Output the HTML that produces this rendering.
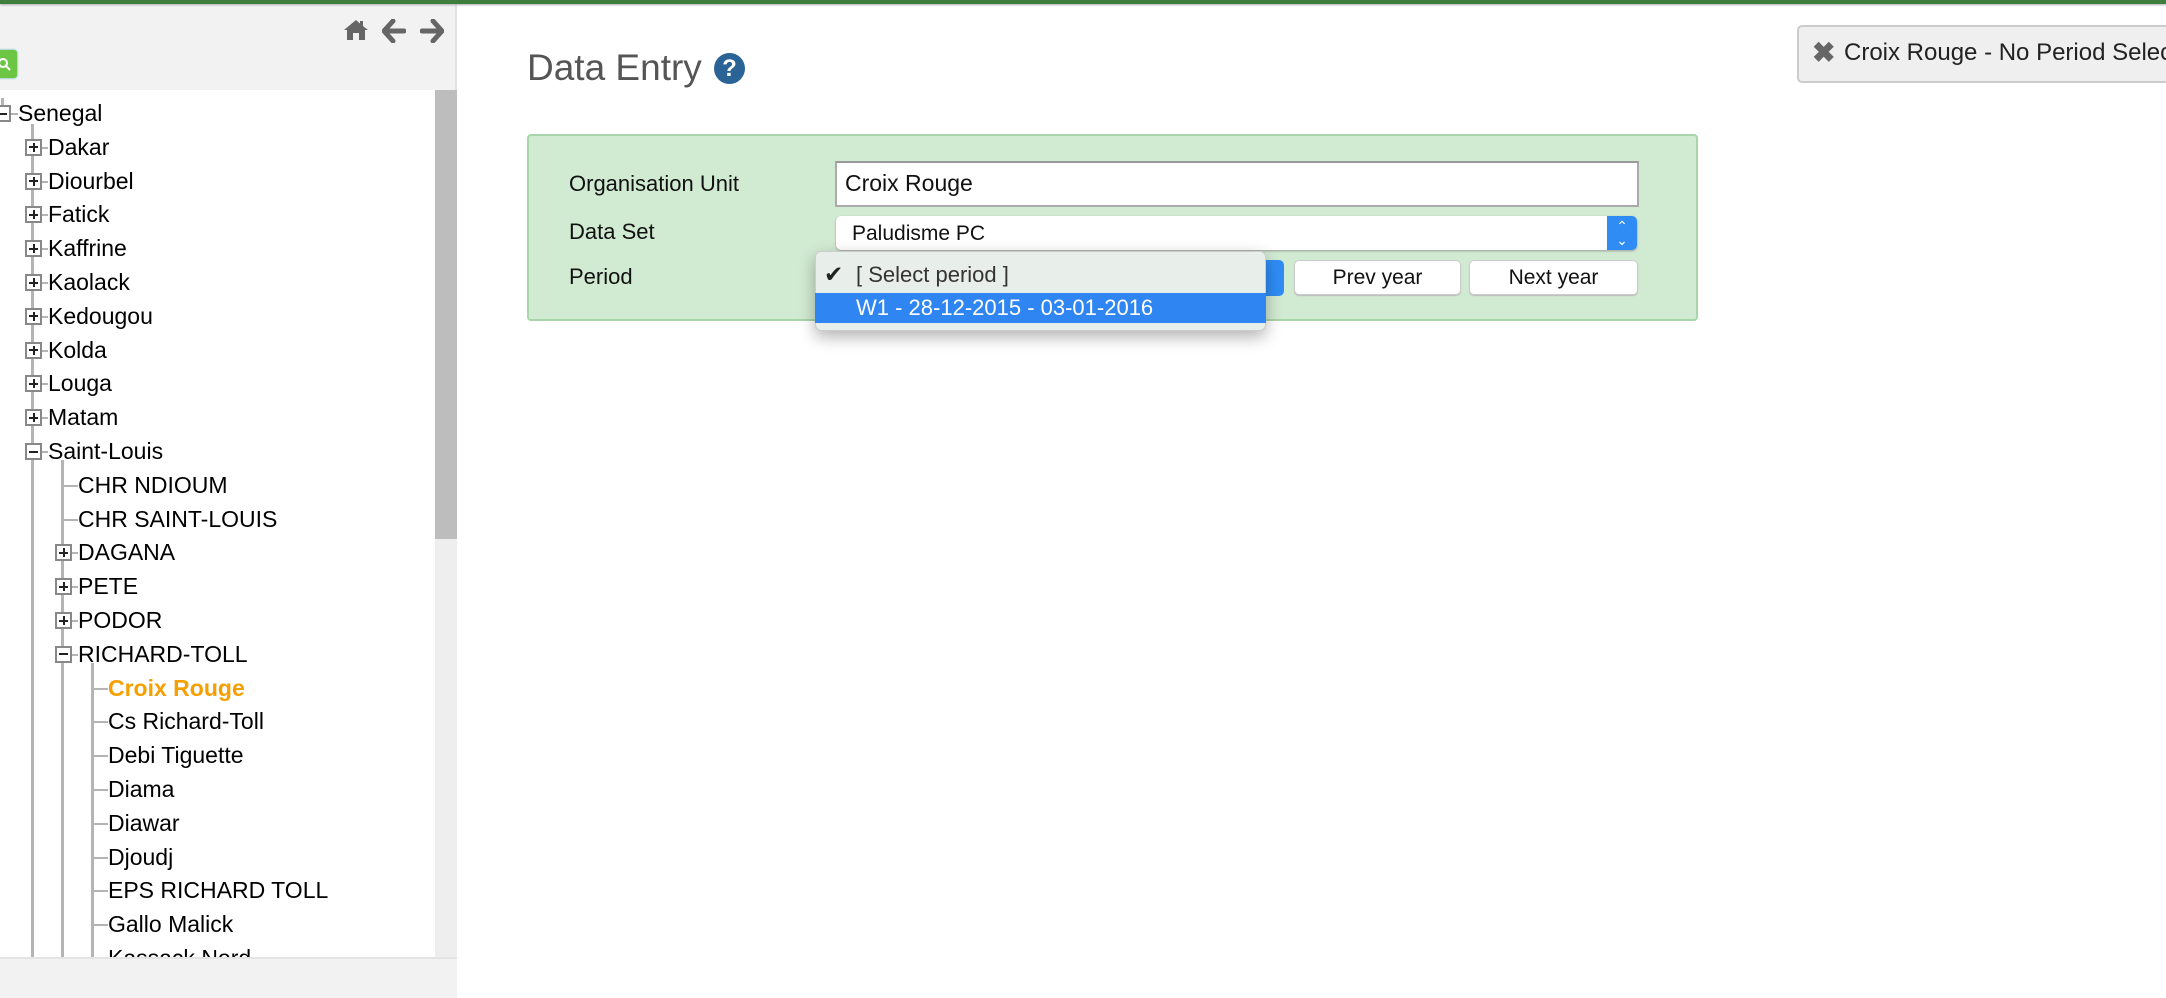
<!DOCTYPE html>
<html><head><meta charset="utf-8"><style>
*{margin:0;padding:0;box-sizing:border-box}
html,body{width:2166px;height:998px;overflow:hidden}
body{position:relative;background:#fff;font-family:"Liberation Sans",sans-serif}
.abs{position:absolute}
#top{left:0;top:0;width:2166px;height:4px;background:#3f7d3f;box-shadow:0 1px 2px #aaa}
#left{left:0;top:4px;width:457px;height:994px;background:#f2f2f2;border-right:2px solid #e2e2e2}
#tree{left:0;top:90px;width:435px;height:868px;background:#fff;overflow:hidden}
.row{position:absolute;font-size:23px;color:#000;line-height:26px;white-space:nowrap}
.vl{position:absolute;width:3px;background:#b4b4b4}
.hl{position:absolute;height:2px;background:#b4b4b4}
.box{position:absolute;width:17px;height:17px;border:2px solid #888;background:#fff}
.box:before{content:"";position:absolute;left:2px;top:5.5px;width:9px;height:2px;background:#222}
.box.p:after{content:"";position:absolute;left:5.5px;top:2px;width:2px;height:9px;background:#222}
#sb{left:435px;top:90px;width:22px;height:868px;background:#eee}
#thumb{left:435px;top:90px;width:22px;height:449px;background:#bdbdbd}
.lbl{position:absolute;font-size:22px;color:#111}
.btn{position:absolute;background:#fff;border:1px solid #ccc;border-radius:5px;font-size:21px;text-align:center;color:#111;box-shadow:0 1px 1px #bbb}
</style></head><body>
<div class="abs" id="left"></div>
<div class="abs" id="top"></div>
<svg class="abs" style="left:343px;top:19px" width="26" height="22" viewBox="0 0 26 22"><path d="M13 1 L1 11 L4 11 L4 21 L10 21 L10 14 L16 14 L16 21 L22 21 L22 11 L25 11 L20 7 L20 2 L17 2 L17 4.5Z" fill="#666"/></svg>
<svg class="abs" style="left:382px;top:19px" width="24" height="24" viewBox="0 0 24 24"><path d="M11 2 L2 12 L11 22 M3 12 L22 12" stroke="#666" stroke-width="5" fill="none" stroke-linejoin="round" stroke-linecap="round"/></svg>
<svg class="abs" style="left:420px;top:19px" width="24" height="24" viewBox="0 0 24 24"><path d="M13 2 L22 12 L13 22 M21 12 L2 12" stroke="#666" stroke-width="5" fill="none" stroke-linejoin="round" stroke-linecap="round"/></svg>
<div class="abs" style="left:-8px;top:50px;width:25px;height:28px;background:#6cc644;border-radius:3px;box-shadow:0 0 2px #4a9"></div>
<svg class="abs" style="left:0;top:56px" width="12" height="16"><circle cx="3" cy="7" r="4" stroke="#fff" stroke-width="2" fill="none"/><path d="M6 10 L10 14" stroke="#fff" stroke-width="2"/></svg>
<div class="abs" id="tree">
<div class="vl" style="left:31px;top:34px;height:840px"></div>
<div class="vl" style="left:61px;top:370px;height:500px"></div>
<div class="vl" style="left:91px;top:573px;height:300px"></div>
<div class="vl" style="left:1px;top:8px;height:15px"></div>
</div>
<div class="abs" id="sb"></div><div class="abs" id="thumb"></div>
<div class="abs" style="left:0;top:957px;width:457px;height:41px;background:#f2f2f2;border-top:2px solid #e4e4e4"></div>
<div class="abs" style="left:527px;top:47px;font-size:37px;color:#555">Data Entry</div>
<div class="abs" style="left:714px;top:53px;width:31px;height:31px;border-radius:50%;background:#2a6496;color:#fff;font-weight:bold;font-size:24px;text-align:center;line-height:31px">?</div>
<div class="abs" style="left:527px;top:134px;width:1171px;height:187px;background:#d1ead2;border:2px solid #a9d6a9;border-radius:4px"></div>
<div class="lbl" style="left:569px;top:171px">Organisation Unit</div>
<div class="lbl" style="left:569px;top:219px">Data Set</div>
<div class="lbl" style="left:569px;top:264px">Period</div>
<div class="abs" style="left:835px;top:161px;width:804px;height:46px;background:#fff;border:2px solid #aaa;border-top-color:#999"></div>
<div class="abs" style="left:845px;top:170px;font-size:23px;color:#111">Croix Rouge</div>
<div class="abs" style="left:836px;top:216px;width:801px;height:34px;background:#fff;border-radius:5px;box-shadow:0 1px 2px #999"></div>
<div class="abs" style="left:852px;top:222px;font-size:21px;color:#111">Paludisme PC</div>
<div class="abs" style="left:1607px;top:216px;width:30px;height:34px;background:#2f8cf5;border-radius:0 5px 5px 0;color:#fff;font-size:14px;text-align:center;line-height:14px;padding-top:3px">&#8963;<br>&#8964;</div>
<div class="abs" style="left:1250px;top:260px;width:34px;height:36px;background:#2f8cf5;border-radius:0 5px 5px 0"></div>
<div class="btn" style="left:1294px;top:260px;width:167px;height:35px;line-height:33px">Prev year</div>
<div class="btn" style="left:1469px;top:260px;width:169px;height:35px;line-height:33px">Next year</div>
<div class="abs" style="left:815px;top:251px;width:451px;height:80px;background:#e8eeea;border-radius:6px;box-shadow:0 6px 16px rgba(0,0,0,.3);border:1px solid #ccc"></div>
<div class="abs" style="left:824px;top:261px;font-size:23px;color:#222">&#10004;</div>
<div class="abs" style="left:856px;top:262px;font-size:22px;color:#333">[ Select period ]</div>
<div class="abs" style="left:815px;top:293px;width:451px;height:30px;background:#2f86f2"></div>
<div class="abs" style="left:856px;top:295px;font-size:22px;color:#fff">W1 - 28-12-2015 - 03-01-2016</div>
<div class="abs" style="left:1797px;top:25px;width:369px;height:58px;background:#efefef;border:2px solid #ccc;border-right:none;border-radius:5px 0 0 5px;overflow:hidden;white-space:nowrap">
<span style="position:absolute;left:13px;top:9px;font-size:28px;font-weight:bold;color:#666">&#10006;</span>
<span style="position:absolute;left:45px;top:12px;font-size:24px;color:#222">Croix Rouge - No Period Selec</span></div>
<script>
var rows=[[0,"Senegal","m"],[1,"Dakar","p"],[1,"Diourbel","p"],[1,"Fatick","p"],[1,"Kaffrine","p"],[1,"Kaolack","p"],[1,"Kedougou","p"],[1,"Kolda","p"],[1,"Louga","p"],[1,"Matam","p"],[1,"Saint-Louis","m"],[2,"CHR NDIOUM",""],[2,"CHR SAINT-LOUIS",""],[2,"DAGANA","p"],[2,"PETE","p"],[2,"PODOR","p"],[2,"RICHARD-TOLL","m"],[3,"Croix Rouge","s"],[3,"Cs Richard-Toll",""],[3,"Debi Tiguette",""],[3,"Diama",""],[3,"Diawar",""],[3,"Djoudj",""],[3,"EPS RICHARD TOLL",""],[3,"Gallo Malick",""],[3,"Kassack Nord",""]];
var t=document.getElementById('tree'),h='';
rows.forEach(function(r,i){var L=r[0],cy=114-90+i*33.8,lx=L==0?1:30*L+2;
h+='<div class="hl" style="left:'+lx+'px;top:'+(cy-1)+'px;width:'+(30*L+18-lx)+'px"></div>';
if(r[2]=='p'||r[2]=='m')h+='<div class="box '+(r[2]=='p'?'p':'')+'" style="left:'+(lx-7)+'px;top:'+(cy-9)+'px"></div>';
h+='<div class="row" style="left:'+(30*L+18)+'px;top:'+(cy-14)+'px;'+(r[2]=='s'?'color:#f5a000;font-weight:bold':'')+'">'+r[1]+'</div>';});
t.insertAdjacentHTML('beforeend',h);
</script>
</body></html>
